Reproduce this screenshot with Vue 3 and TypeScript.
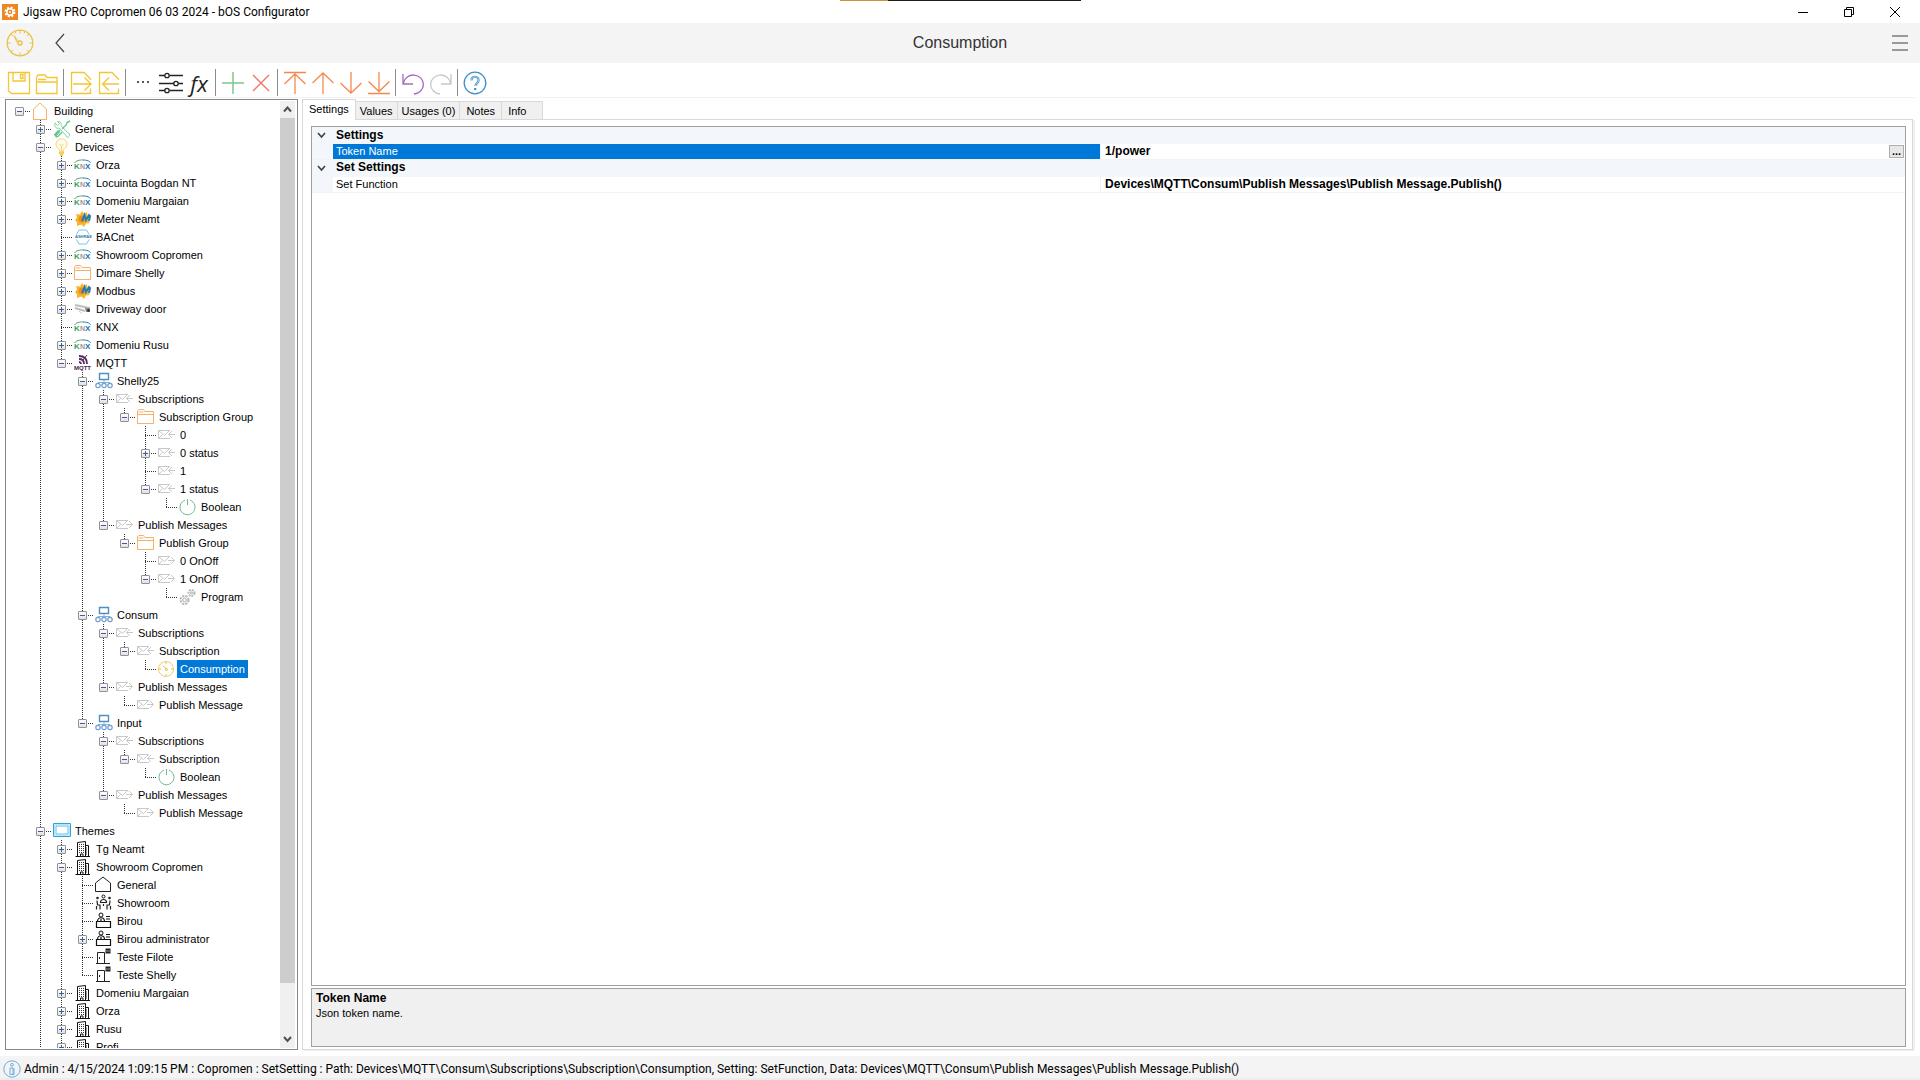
<script setup lang="ts">
import { ref } from 'vue'

interface TreeRow {
  level: number
  icon: string
  label: string
  state: '' | '+' | '-'
}

interface Tool {
  name: string
  title: string
  color: string
}

const icons: Record<string, string> = {
  house: '<path d="M1.500 17.500V7L8 1l6.500 6v10.500z" stroke="#f5b067"/>',
  tools:
    '<path d="M2 3l2.500 2.500 2-2L4.500 1.500C7 1 9 3 8 5.500l7 7.500c1.500 0 2 2 1 3.500s-3 1-3-1L6 8C3.500 9 1 7 2 3z" stroke="#7fcfa4"/><path d="M17 1l-3 1.500-.5 2L9 9M7 10l-5 5 1.500 2L5 16.500l4-4.500" stroke="#68c594" stroke-width="1.400"/><path d="M2 15.500l4-4.500" stroke="#68c594" stroke-width="3"/>',
  bulb:
    '<path d="M6.500 13.500v-2C4 10 3 8 3 6.200a5.500 5.500 0 0 1 11 0c0 2-1 3.800-3.500 5.300v2z" stroke="#f8d568" fill="#fffaf0"/><path d="M6.500 6l2 2 2-2M8.500 8v5" stroke="#f8d568"/><path d="M6 15h5M7 17h3" stroke="#f0c030" stroke-width="1.500"/>',
  knx:
    '<path d="M.5 7C3 3.500 8 4 9.500 4" stroke="#55a06c"/><path d="M9 4c4 0 7 1 7.500 3" stroke="#2b7fb5"/><text x="0" y="13" font-size="8" font-weight="700" font-family="Liberation Sans" fill="#3c9c55">K</text><text x="6" y="13" font-size="7" font-weight="700" font-family="Liberation Sans" fill="#999">N</text><text x="11" y="13" font-size="8" font-weight="700" font-family="Liberation Sans" fill="#1672ac">X</text>',
  modbus:
    '<path d="M8 1l2 3 3-2 .5 4 3 1-2 3 1 3-3.500.5L10 17l-2.500-2.500L3 16v-3.500L1 10l2-2.500L2 4l4 .5z" fill="#f7b52c"/><circle cx="8" cy="9" r="3.500" fill="#ef8e1c"/><path d="M8 11l2.500-6 1.500 5L15 5l1 1-1 5" stroke="#217cb8" stroke-width="2"/>',
  bacnet:
    '<path d="M5 2h7.500L16.500 9l-4 7H5L1 9z" stroke="#7cc4ea"/><path d="M0 9h18" stroke="#fff" stroke-width="5"/><text x="1" y="10" font-size="4" font-weight="700" font-family="Liberation Sans" fill="#2b78a8">ASHRAE</text>',
  folder:
    '<path d="M.5 15.500V2.800L2 1.500h4.500L8 3.500h8.500v12zM.5 6.500h16M1.500 4h5" stroke="#f7b06c"/>',
  camera:
    '<path d="M1 5l12 2.500 3 .5M1 8l10 3" stroke="#bdbdbd" stroke-width="2"/><path d="M11 8h5v4h-4z" fill="#888"/><circle cx="14.500" cy="10.500" r="1.300" fill="#222"/><path d="M5 11l3 2.500" stroke="#ccc"/>',
  mqtt:
    '<path d="M5 2c5 0 8 3 8 8M5 5c3 0 5 2 5 5M5 8a2 2 0 0 1 2 2" stroke="#5b2a63" stroke-width="1.800"/><path d="M13 1l-4 5" stroke="#5b2a63"/><text x="0" y="16" font-size="6" font-weight="700" font-family="Liberation Sans" fill="#4b1c54">MQTT</text>',
  net:
    '<path d="M4.500 1.500h9v6h-9z" stroke="#4f8fc4" stroke-width="1.400"/><path d="M9 8v3M3 12v-1.500h12V12" stroke="#8aaed2"/><circle cx="3" cy="13.500" r="2.200" stroke="#6f9dcf" stroke-width="1.200"/><circle cx="9" cy="13.500" r="2.200" stroke="#6f9dcf" stroke-width="1.200"/><circle cx="15" cy="13.500" r="2.200" stroke="#6f9dcf" stroke-width="1.200"/>',
  mailin:
    '<path d="M12 4.500H.5v8H12M.5 4.500l6 5 5-5M.5 12.500l4-4M17 8.500h-6M14 5L10.500 8.500 14 12" stroke="#c8c8c8"/>',
  mailout:
    '<path d="M12 4.500H.5v8H12M.5 4.500l6 5 5-5M.5 12.500l4-4M10 8.500h6M13 5l3.500 3.500L13 12" stroke="#c8c8c8"/>',
  power: '<path d="M6 2.200a7.500 7.500 0 1 0 5 0" stroke="#6dbb88"/><path d="M8.500 1v6" stroke="#6dbb88"/>',
  program:
    '<circle cx="5.500" cy="12" r="4" stroke="#b5b5b5" stroke-width="2" stroke-dasharray="2.200 1"/><circle cx="5.500" cy="12" r="1.800" stroke="#aaa"/><circle cx="12.500" cy="5" r="3" stroke="#b5b5b5" stroke-width="2" stroke-dasharray="1.800 1"/><circle cx="12.500" cy="5" r="1" stroke="#aaa"/>',
  gauge:
    '<circle cx="8" cy="9" r="7.500" stroke="#efcf6a"/><circle cx="8.500" cy="9.500" r="1" stroke="#e3b52e"/><path d="M8 9L5 5.500M8 2v2M8 14v2M1 9h2M13 9h2" stroke="#e8c04a"/>',
  screen:
    '<path d="M.5 1.500h17v13H.5z" stroke="#2fa4d8"/><path d="M3 4h12v8H3z" stroke="#5bbde6" fill="#fff"/><path d="M1.700 2.700h14.600v10.600H1.700z" stroke="#a6ddf5"/>',
  building:
    '<path d="M3.500 16.500V2.500l8-1v15M12 5.500h2.500v11M1.500 16.500H16" stroke="#111"/><path d="M5.500 4v9M7.500 4v9M9.500 4v9M12.500 7.500v8" stroke="#333" stroke-dasharray="1 1"/><path d="M6.500 16.500v-2.500h2.500v2.500" stroke="#111"/>',
  home: '<path d="M.5 15.500V7L8 1l7.500 6v8.500z" stroke="#222"/>',
  people:
    '<circle cx="8.500" cy="2.500" r="1.500" stroke="#111"/><circle cx="2.500" cy="4" r="1.300" fill="#222"/><circle cx="14.500" cy="4" r="1.300" fill="#222"/><path d="M5.500 8.500c0-4 6-4 6 0zM2 6.500l.5 4.500H5v4.500M15 6.500l-.5 4.500H12v4.500M1.500 12v3.500M15.500 12v3.500M8.500 10v2" stroke="#222" stroke-width="1.200"/>',
  desk:
    '<circle cx="6" cy="3" r="2" stroke="#111"/><path d="M2.500 9.500c0-5 7-5 7 0M6 7v2M1.500 9.500h14v6h-14zM11 4.500h4M11 7h4" stroke="#111" stroke-width="1.200"/>',
  door:
    '<path d="M2.500 15.500v-11h7v11M1 15.500h8M9 15.500h6" stroke="#222"/><path d="M4.500 9v2" stroke="#222"/><path d="M10.500 .5h5v5h-5z" fill="#222"/><path d="M11 3h4" stroke="#999"/>',
  save: '<path d="M1.500 1.500h21v21h-18l-3-2.500z"/><path d="M6 1.500v8.500h12v-8.500M13.500 3.500h2.500v4h-2.500z"/>',
  open: '<path d="M1.500 22.500v-16l1.500-2.500h7l2 2.500h10v16zM1.500 11h21M3 8.500h8"/>',
  import: '<path d="M21.500 9V8L15 1.500H2.500v21h19v-5M4 13h17M15.500 6.500L22 13l-6.500 6.500"/>',
  export: '<path d="M21.500 9V8L15 1.500H2.500v21h19v-5M22 13H6M12 6.500L5.500 13l6.500 6.500"/>',
  dots: '<path d="M6 11h2M11 11h2M16 11h2" stroke-width="1.600"/>',
  sliders:
    '<path d="M0 4.500h6M10.500 4.500H24M0 12.500h15M19.500 12.500H24M0 19.500h6M10.500 19.500H24"/><circle cx="8" cy="4.500" r="2.200"/><circle cx="17" cy="12.500" r="2.200"/><circle cx="8" cy="19.500" r="2.200"/>',
  add: '<path d="M12 1v22M1 12h22" stroke-width="1.500"/>',
  remove: '<path d="M4 4l16 16M20 4L4 20" stroke-width="1.300"/>',
  top: '<path d="M1 1.500h22M12 23V3M1.500 13L12 3l10.500 10"/>',
  up: '<path d="M12 23V2M1.500 12L12 2l10.500 10"/>',
  down: '<path d="M12 1v21M1.500 12L12 22l10.500-10"/>',
  bottom: '<path d="M1 22.500h22M12 1v19M1.500 10.500L12 20.500l10.500-10"/>',
  undo: '<path d="M2 3v10h10M2.500 12A10 9.500 0 1 1 13 23"/>',
  redo: '<path d="M22 3v10H12M21.500 12A10 9.500 0 1 0 11 23"/>',
  help: '<circle cx="12" cy="12" r="10.800" stroke-width="1.300"/><path d="M8.500 9.500c0-5.500 7.500-4.500 7 0 0 2.500-2.800 2.500-3 5.500M12.200 17v2" stroke-width="2.200"/><path d="M8.500 9.500c0-5.500 7.500-4.500 7 0 0 2.500-2.800 2.500-3 5.500" stroke="#fff" stroke-width=".6"/>',
}

function row(level: number, icon: string, label: string, state: TreeRow['state'] = ''): TreeRow {
  return { level, icon, label, state }
}

const rows: TreeRow[] = [
  row(0, 'house', 'Building', '-'),
  row(1, 'tools', 'General', '+'),
  row(1, 'bulb', 'Devices', '-'),
  row(2, 'knx', 'Orza', '+'),
  row(2, 'knx', 'Locuinta Bogdan NT', '+'),
  row(2, 'knx', 'Domeniu Margaian', '+'),
  row(2, 'modbus', 'Meter Neamt', '+'),
  row(2, 'bacnet', 'BACnet'),
  row(2, 'knx', 'Showroom Copromen', '+'),
  row(2, 'folder', 'Dimare Shelly', '+'),
  row(2, 'modbus', 'Modbus', '+'),
  row(2, 'camera', 'Driveway door', '+'),
  row(2, 'knx', 'KNX'),
  row(2, 'knx', 'Domeniu Rusu', '+'),
  row(2, 'mqtt', 'MQTT', '-'),
  row(3, 'net', 'Shelly25', '-'),
  row(4, 'mailin', 'Subscriptions', '-'),
  row(5, 'folder', 'Subscription Group', '-'),
  row(6, 'mailin', '0'),
  row(6, 'mailin', '0 status', '+'),
  row(6, 'mailin', '1'),
  row(6, 'mailin', '1 status', '-'),
  row(7, 'power', 'Boolean'),
  row(4, 'mailout', 'Publish Messages', '-'),
  row(5, 'folder', 'Publish Group', '-'),
  row(6, 'mailout', '0 OnOff'),
  row(6, 'mailout', '1 OnOff', '-'),
  row(7, 'program', 'Program'),
  row(3, 'net', 'Consum', '-'),
  row(4, 'mailin', 'Subscriptions', '-'),
  row(5, 'mailin', 'Subscription', '-'),
  row(6, 'gauge', 'Consumption'),
  row(4, 'mailout', 'Publish Messages', '-'),
  row(5, 'mailout', 'Publish Message'),
  row(3, 'net', 'Input', '-'),
  row(4, 'mailin', 'Subscriptions', '-'),
  row(5, 'mailin', 'Subscription', '-'),
  row(6, 'power', 'Boolean'),
  row(4, 'mailout', 'Publish Messages', '-'),
  row(5, 'mailout', 'Publish Message'),
  row(1, 'screen', 'Themes', '-'),
  row(2, 'building', 'Tg Neamt', '+'),
  row(2, 'building', 'Showroom Copromen', '-'),
  row(3, 'home', 'General'),
  row(3, 'people', 'Showroom'),
  row(3, 'desk', 'Birou'),
  row(3, 'desk', 'Birou administrator', '+'),
  row(3, 'door', 'Teste Filote'),
  row(3, 'door', 'Teste Shelly'),
  row(2, 'building', 'Domeniu Margaian', '+'),
  row(2, 'building', 'Orza', '+'),
  row(2, 'building', 'Rusu', '+'),
  row(2, 'building', 'Profi', '+'),
]

const selected = ref('Consumption')

// True when a later sibling exists at this level, so the guide line runs on.
// The list goes on below the fold at levels 1 and 2.
function continues(index: number, level: number): boolean {
  if (level === 0) return false
  for (let i = index + 1; i < rows.length; i++) {
    if (rows[i].level < level) return false
    if (rows[i].level === level) return true
  }
  return level <= 2
}

const toolGroups: Tool[][] = [
  [
    { name: 'save', title: 'Save', color: '#f4c534' },
    { name: 'open', title: 'Open', color: '#f4c534' },
  ],
  [
    { name: 'import', title: 'Import', color: '#f4c534' },
    { name: 'export', title: 'Export', color: '#f4c534' },
  ],
  [
    { name: 'dots', title: 'More', color: '#222222' },
    { name: 'sliders', title: 'Properties', color: '#222222' },
    { name: 'fx', title: 'Function', color: '#222222' },
  ],
  [
    { name: 'add', title: 'Add', color: '#7cc98f' },
    { name: 'remove', title: 'Remove', color: '#ee7464' },
  ],
  [
    { name: 'top', title: 'Move to top', color: '#f4894f' },
    { name: 'up', title: 'Move up', color: '#f4894f' },
    { name: 'down', title: 'Move down', color: '#f4894f' },
    { name: 'bottom', title: 'Move to bottom', color: '#f4894f' },
  ],
  [
    { name: 'undo', title: 'Undo', color: '#a06cc0' },
    { name: 'redo', title: 'Redo', color: '#c8c8c8' },
  ],
  [{ name: 'help', title: 'Help', color: '#3f8fcc' }],
]

const tabs = ['Settings', 'Values', 'Usages (0)', 'Notes', 'Info']
const activeTab = ref('Settings')
</script>

<template>
  <div class="window">
    <div class="peek"><i></i><b></b></div>

    <header class="titlebar">
      <svg class="app-icon" viewBox="0 0 16 16">
        <rect width="16" height="16" fill="#ee8622" />
        <circle cx="8" cy="8" r="4.500" fill="none" stroke="#fff" stroke-width="2" stroke-dasharray="2 1.530" />
        <circle cx="8" cy="8" r="3.200" fill="none" stroke="#fff" stroke-width="1.600" />
        <circle cx="8" cy="8" r="1" fill="#fff" />
      </svg>
      <span class="app-title">Jigsaw PRO Copromen 06 03 2024 - bOS Configurator</span>
      <div class="win-buttons">
        <button type="button" aria-label="Minimize">
          <svg width="12" height="12" viewBox="0 0 12 12"><path d="M1 6.500h10" stroke="#000" /></svg>
        </button>
        <button type="button" aria-label="Restore">
          <svg width="12" height="12" viewBox="0 0 12 12" fill="none" stroke="#000">
            <path d="M1.500 3.500h7v7h-7zM3.500 3.500v-2h7v7h-2" />
          </svg>
        </button>
        <button type="button" aria-label="Close">
          <svg width="12" height="12" viewBox="0 0 12 12"><path d="M1 1l10 10M11 1L1 11" stroke="#000" /></svg>
        </button>
      </div>
    </header>

    <div class="banner">
      <div class="banner-side">
        <svg width="28" height="28" viewBox="0 0 28 28" fill="none" stroke="#e9c346">
          <circle cx="14" cy="14" r="12.800" stroke-width="1.300" />
          <circle cx="14" cy="14" r="2" stroke-width="1.400" />
          <path d="M12.500 12.500L8 6.500l3 7M14 1.500v3M14 23.500v3M1.500 14h3M23.500 14h3M5 5l2 2M23 5l-2 2M5 23l2-2M23 23l-2-2M9 2.500l1 2M19 2.500l-1 2" />
        </svg>
        <button class="back" type="button" aria-label="Back">
          <svg width="12" height="20" viewBox="0 0 12 20" fill="none" stroke="#444" stroke-width="1.200">
            <path d="M10 1L2 10l8 9" />
          </svg>
        </button>
      </div>
      <h1>Consumption</h1>
      <div class="banner-side end">
        <button class="menu" type="button" aria-label="Menu"><i></i><i></i><i></i></button>
      </div>
    </div>

    <nav class="toolbar">
      <div v-for="(group, g) in toolGroups" :key="g" class="tool-group">
        <button v-for="tool in group" :key="tool.name" type="button" :title="tool.title" :aria-label="tool.title">
          <span v-if="tool.name === 'fx'" class="fx">fx</span>
          <svg
            v-else
            width="24"
            height="24"
            viewBox="0 0 24 24"
            fill="none"
            stroke-width="1.300"
            :stroke="tool.color"
            v-html="icons[tool.name]"
          ></svg>
        </button>
      </div>
    </nav>

    <main class="body">
      <aside class="tree-panel">
        <div class="tree" role="tree">
          <div v-for="(r, i) in rows" :key="i" class="node" role="treeitem" :aria-level="r.level + 1">
            <span v-for="l in r.level" :key="l" class="guide" :class="{ line: continues(i, l - 1) }"></span>
            <span class="guide own" :class="{ top: r.level > 0, line: continues(i, r.level) }">
              <button
                v-if="r.state"
                type="button"
                class="expander"
                :class="{ plus: r.state === '+' }"
                :aria-label="r.state === '+' ? 'Expand' : 'Collapse'"
              ></button>
            </span>
            <svg class="node-icon" viewBox="0 0 18 18" fill="none" v-html="icons[r.icon]"></svg>
            <span class="label" :class="{ selected: r.label === selected }" @click="selected = r.label">{{ r.label }}</span>
          </div>
        </div>
        <div class="scrollbar">
          <button type="button" aria-label="Scroll up">
            <svg width="9" height="7" viewBox="0 0 9 7"><path d="M1 5.500l3.500-4 3.500 4" fill="none" stroke="#505050" stroke-width="2" /></svg>
          </button>
          <div class="track"><div class="thumb"></div></div>
          <button type="button" aria-label="Scroll down">
            <svg width="9" height="7" viewBox="0 0 9 7"><path d="M1 1l3.500 4L8 1" fill="none" stroke="#505050" stroke-width="2" /></svg>
          </button>
        </div>
      </aside>

      <section class="details">
        <div class="tabs" role="tablist">
          <button
            v-for="tab in tabs"
            :key="tab"
            type="button"
            role="tab"
            :class="{ active: tab === activeTab }"
            :aria-selected="tab === activeTab"
            @click="activeTab = tab"
          >
            {{ tab }}
          </button>
        </div>
        <div class="page">
          <div class="grid">
            <table>
              <colgroup>
                <col class="gutter-col" />
                <col />
                <col class="value-col" />
              </colgroup>
              <tbody>
                <tr class="category">
                  <td><svg width="9" height="7" viewBox="0 0 9 7"><path d="M1 1l3.500 4L8 1" fill="none" stroke="#404040" stroke-width="1.600" /></svg></td>
                  <th colspan="2">Settings</th>
                </tr>
                <tr class="item current">
                  <td></td>
                  <td>Token Name</td>
                  <td>
                    <div class="value">1/power<button type="button" aria-label="Edit value">...</button></div>
                  </td>
                </tr>
                <tr class="category">
                  <td><svg width="9" height="7" viewBox="0 0 9 7"><path d="M1 1l3.500 4L8 1" fill="none" stroke="#404040" stroke-width="1.600" /></svg></td>
                  <th colspan="2">Set Settings</th>
                </tr>
                <tr class="item">
                  <td></td>
                  <td>Set Function</td>
                  <td><div class="value">Devices\MQTT\Consum\Publish Messages\Publish Message.Publish()</div></td>
                </tr>
              </tbody>
            </table>
          </div>
          <div class="hint">
            <strong>Token Name</strong>
            <span>Json token name.</span>
          </div>
        </div>
      </section>
    </main>

    <footer class="status">
      <svg width="18" height="18" viewBox="0 0 18 18" fill="none" stroke="#6cace0">
        <circle cx="9" cy="9" r="8.200" />
        <circle cx="9" cy="4.800" r="1.400" />
        <path d="M7 8h3v6M7 8v6.500h4V8" />
      </svg>
      <span>Admin : 4/15/2024 1:09:15 PM : Copromen : SetSetting : Path: Devices\MQTT\Consum\Subscriptions\Subscription\Consumption, Setting: SetFunction, Data: Devices\MQTT\Consum\Publish Messages\Publish Message.Publish()</span>
    </footer>
  </div>
</template>

<style>
body {
  margin: 0;
  background: #fff;
}
</style>

<style scoped>
* {
  box-sizing: border-box;
}

button {
  margin: 0;
  padding: 0;
  border: 0;
  background: none;
  color: inherit;
  font: inherit;
}

svg {
  display: block;
  flex: none;
}

.window {
  position: relative;
  display: flex;
  flex-direction: column;
  height: 100vh;
  overflow: hidden;
  color: #000;
  font: 11px/18px 'Liberation Sans', Arial, sans-serif;
}

.peek {
  position: absolute;
  top: 0;
  left: 50%;
  display: flex;
  width: 241px;
  height: 1px;
  margin-left: -120px;
}

.peek i {
  width: 48px;
  background: #d08f35;
}

.peek b {
  flex: 1;
  background: #1c1c1c;
}

.titlebar {
  display: flex;
  align-items: center;
  height: 23px;
  flex: none;
  padding: 0 2px;
}

.app-icon {
  width: 16px;
  height: 16px;
}

.app-title {
  margin-left: 5px;
  font: 12px/22px Roboto, 'Noto Sans', sans-serif;
}

.win-buttons {
  display: flex;
  margin-left: auto;
}

.win-buttons button {
  display: grid;
  place-items: center;
  width: 46px;
  height: 20px;
}

.banner {
  display: flex;
  align-items: center;
  height: 40px;
  flex: none;
  padding: 0 6px;
  background: #f4f4f4;
}

.banner-side {
  display: flex;
  flex: 1;
  align-items: center;
}

.banner-side.end {
  justify-content: flex-end;
}

.back {
  margin-left: 20px;
}

.banner h1 {
  margin: 0;
  color: #333;
  font: 400 16px/20px 'Liberation Sans', Arial, sans-serif;
}

.menu {
  display: flex;
  flex-direction: column;
  gap: 5px;
  width: 16px;
  margin-right: 6px;
}

.menu i {
  height: 2px;
  background: #999;
}

.toolbar {
  display: flex;
  align-items: center;
  flex: none;
  height: 35px;
  margin-right: 5px;
  padding: 5px 0 0 5px;
  border-bottom: 1px solid #f2f2f2;
}

.tool-group {
  display: flex;
}

.tool-group + .tool-group {
  margin-left: 2px;
  padding-left: 3px;
  border-left: 1px solid #8c8c8c;
}

.tool-group button {
  display: grid;
  place-items: center;
  width: 28px;
  height: 27px;
}

.fx {
  color: #222;
  font: italic 22px/24px 'Open Sans', sans-serif;
}

.body {
  display: flex;
  flex: 1;
  min-height: 0;
  padding: 1px 5px 6px;
}

.tree-panel {
  display: flex;
  width: 293px;
  flex: none;
  padding: 1px;
  border: 1px solid #828790;
}

.tree {
  flex: 1;
  min-width: 0;
  padding: 1px 0 0 2px;
  overflow: hidden;
}

.node {
  display: flex;
  height: 18px;
  white-space: nowrap;
}

.guide {
  position: relative;
  width: 21px;
  height: 18px;
  flex: none;
}

.guide.line::before,
.guide.top::before {
  position: absolute;
  top: 0;
  left: 10px;
  width: 1px;
  height: 10px;
  background: repeating-linear-gradient(#333 0 1px, transparent 1px 2px);
  content: '';
}

.guide.line::before {
  height: 18px;
}

.guide.own::after {
  position: absolute;
  top: 9px;
  left: 10px;
  width: 12px;
  height: 1px;
  background: repeating-linear-gradient(90deg, #333 0 1px, transparent 1px 2px);
  content: '';
}

.expander {
  position: absolute;
  z-index: 1;
  top: 5px;
  left: 6px;
  width: 9px;
  height: 9px;
  border: 1px solid #919191;
  border-radius: 1px;
  background: linear-gradient(#3f5c9f, #3f5c9f) center / 5px 1px no-repeat, linear-gradient(#fff, #e2e2e2);
}

.expander.plus {
  background: linear-gradient(#3f5c9f, #3f5c9f) center / 5px 1px no-repeat,
    linear-gradient(#3f5c9f, #3f5c9f) center / 1px 5px no-repeat, linear-gradient(#fff, #e2e2e2);
}

.node-icon {
  width: 18px;
  height: 18px;
  margin-left: 2px;
}

.label {
  margin-left: 1px;
  padding: 0 3px;
}

.label.selected {
  background: #0078d7;
  color: #fff;
}

.scrollbar {
  display: flex;
  flex-direction: column;
  width: 16px;
  padding-right: 1px;
  background: linear-gradient(#f0f0f0, #f0f0f0) content-box;
}

.scrollbar button {
  display: grid;
  place-items: center;
  height: 17px;
}

.track {
  flex: 1;
}

.thumb {
  height: 94.7%;
  background: #cdcdcd;
}

.details {
  display: flex;
  flex: 1;
  flex-direction: column;
  min-width: 0;
  margin-left: 4px;
}

.tabs {
  display: flex;
  align-items: flex-end;
  height: 20px;
}

.tabs button {
  height: 18px;
  padding: 0 4px;
  border: 1px solid #d9d9d9;
  border-left: 0;
  border-bottom: 0;
  background: #f0f0f0;
}

.tabs button:nth-child(n + 4) {
  padding: 0 6px;
}

.tabs button:last-child {
  padding-right: 16px;
}

.tabs button.active {
  z-index: 1;
  height: 21px;
  margin-bottom: -1px;
  padding: 0 6px 3px;
  border-left: 1px solid #d9d9d9;
  background: #fff;
}

.page {
  display: flex;
  flex: 1;
  flex-direction: column;
  min-height: 0;
  padding: 6px 6px 2px 8px;
  border: 1px solid #d9d9d9;
  box-shadow: 2px 1px 0 #f0f0f0;
  margin-right: 2px;
}

.grid {
  flex: 1;
  min-height: 0;
  border: 1px solid #a0a0a0;
}

table {
  width: 100%;
  border-collapse: collapse;
  table-layout: fixed;
}

td,
th {
  padding: 0 0 0 3px;
  text-align: left;
}

.gutter-col {
  width: 21px;
}

.value-col {
  width: 50.5%;
}

.category {
  height: 17px;
  background: #f3f6fb;
  font: 700 12px/15px 'Liberation Sans', Arial, sans-serif;
}

.category th {
  padding-bottom: 1px;
}

.category td {
  padding-left: 5px;
}

.item {
  height: 15px;
  line-height: 15px;
}

.item td {
  border-bottom: 1px solid #f0f2f5;
}

.item td:first-child {
  background: #f3f6fb;
}

.item td:nth-child(2) {
  border-right: 1px solid #f0f2f5;
}

.item.current td:nth-child(2) {
  background: #0078d7;
  color: #fff;
}

.value {
  display: flex;
  height: 15px;
  align-items: center;
  justify-content: space-between;
  padding-left: 1px;
  font: 700 12px/15px 'Liberation Sans', Arial, sans-serif;
}

.value button {
  width: 15px;
  height: 13px;
  margin-right: 1px;
  border: 1px solid #adadad;
  background: #e8e8e8;
  font-size: 11px;
  line-height: 9px;
}

.hint {
  display: flex;
  flex-direction: column;
  height: 59px;
  flex: none;
  margin-top: 2px;
  padding: 2px 4px;
  border: 1px solid #a0a0a0;
  background: #f0f0f0;
  line-height: 15px;
}

.hint strong {
  font: 700 12px/15px 'Liberation Sans', Arial, sans-serif;
}

.status {
  display: flex;
  align-items: center;
  gap: 3px;
  height: 24px;
  flex: none;
  padding: 2px 3px 0;
  overflow: hidden;
  background: linear-gradient(#f4f4f4 22px, #ececec 22px);
  font: 12px/20px Roboto, 'Noto Sans', sans-serif;
  white-space: nowrap;
}
</style>
